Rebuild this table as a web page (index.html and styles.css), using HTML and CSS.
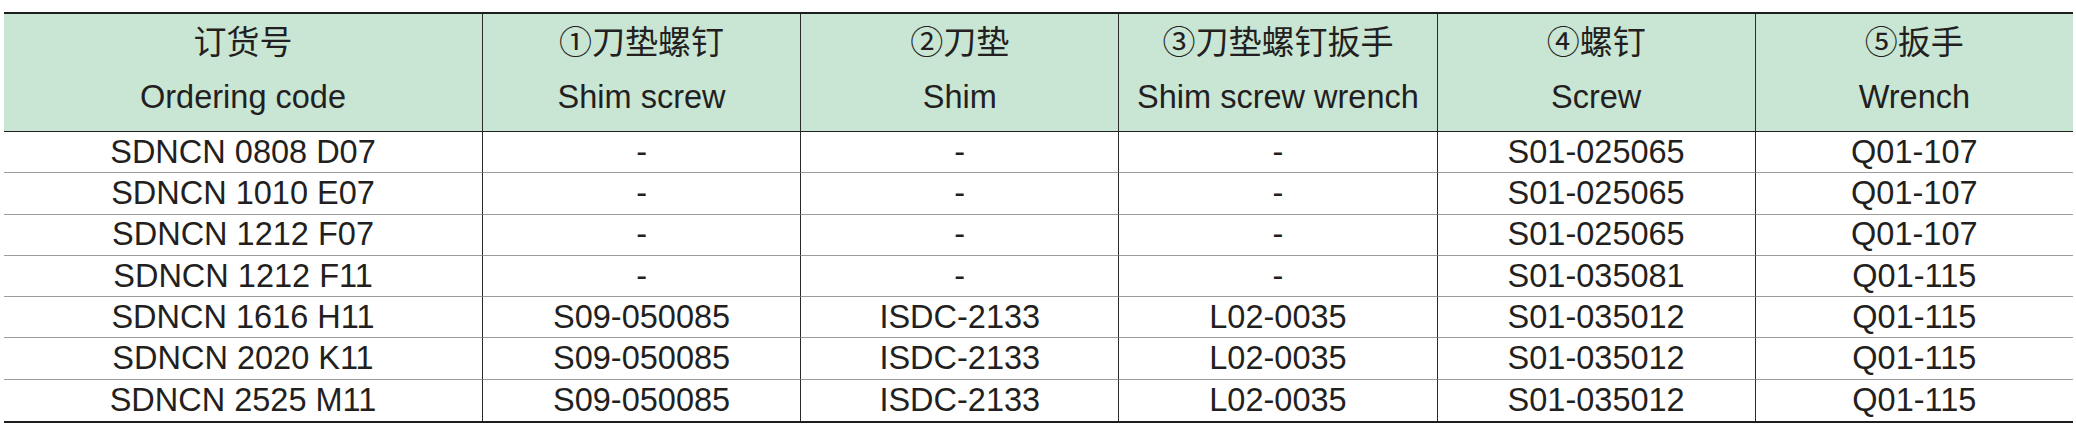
FILE: index.html
```html
<!DOCTYPE html>
<html lang="zh-CN">
<head>
<meta charset="utf-8">
<title>SDNCN 配件表</title>
<link rel="stylesheet" href="styles.css">
</head>
<body>
<div class="spec-table">
  <div class="cell head"><span class="zh">订货号</span><span class="en">Ordering code</span></div>
  <div class="cell head div"><span class="zh">①刀垫螺钉</span><span class="en">Shim screw</span></div>
  <div class="cell head div"><span class="zh">②刀垫</span><span class="en">Shim</span></div>
  <div class="cell head div"><span class="zh">③刀垫螺钉扳手</span><span class="en">Shim screw wrench</span></div>
  <div class="cell head div"><span class="zh">④螺钉</span><span class="en">Screw</span></div>
  <div class="cell head div"><span class="zh">⑤扳手</span><span class="en">Wrench</span></div>

  <div class="cell">SDNCN 0808 D07</div>
  <div class="cell div">-</div>
  <div class="cell div">-</div>
  <div class="cell div">-</div>
  <div class="cell div">S01-025065</div>
  <div class="cell div">Q01-107</div>

  <div class="cell">SDNCN 1010 E07</div>
  <div class="cell div">-</div>
  <div class="cell div">-</div>
  <div class="cell div">-</div>
  <div class="cell div">S01-025065</div>
  <div class="cell div">Q01-107</div>

  <div class="cell">SDNCN 1212 F07</div>
  <div class="cell div">-</div>
  <div class="cell div">-</div>
  <div class="cell div">-</div>
  <div class="cell div">S01-025065</div>
  <div class="cell div">Q01-107</div>

  <div class="cell">SDNCN 1212 F11</div>
  <div class="cell div">-</div>
  <div class="cell div">-</div>
  <div class="cell div">-</div>
  <div class="cell div">S01-035081</div>
  <div class="cell div">Q01-115</div>

  <div class="cell">SDNCN 1616 H11</div>
  <div class="cell div">S09-050085</div>
  <div class="cell div">ISDC-2133</div>
  <div class="cell div">L02-0035</div>
  <div class="cell div">S01-035012</div>
  <div class="cell div">Q01-115</div>

  <div class="cell">SDNCN 2020 K11</div>
  <div class="cell div">S09-050085</div>
  <div class="cell div">ISDC-2133</div>
  <div class="cell div">L02-0035</div>
  <div class="cell div">S01-035012</div>
  <div class="cell div">Q01-115</div>

  <div class="cell last">SDNCN 2525 M11</div>
  <div class="cell div last">S09-050085</div>
  <div class="cell div last">ISDC-2133</div>
  <div class="cell div last">L02-0035</div>
  <div class="cell div last">S01-035012</div>
  <div class="cell div last">Q01-115</div>
</div>
</body>
</html>
```

FILE: styles.css
```css
html, body {
  margin: 0;
  padding: 0;
  background: #ffffff;
}

body {
  font-family: "Liberation Sans", Arial, "Noto Sans CJK SC", sans-serif;
  color: #231f20;
}

.spec-table {
  display: grid;
  grid-template-columns: 478px repeat(5, 318.2px);
  grid-template-rows: 118px repeat(7, 41.3px);
  margin: 12px 0 0 4px;
  width: 2069px;
  border-top: 2px solid #1e1e1e;
  border-bottom: 2px solid #1e1e1e;
}

.cell {
  box-sizing: border-box;
  display: flex;
  align-items: center;
  justify-content: center;
  font-size: 32.5px;
  line-height: 1;
  white-space: nowrap;
  border-bottom: 1px solid #9c9c9c;
}

.cell.last {
  border-bottom: none;
}

.cell.div {
  border-left: 1px solid #2a2a2a;
}

.head {
  flex-direction: column;
  justify-content: flex-start;
  padding-top: 2px;
  background: #c9e5d4;
  border-bottom: 1px solid #1e1e1e;
}

.head .zh,
.head .en {
  display: block;
  height: 54px;
  line-height: 54px;
}

.head .zh {
  font-family: "Liberation Sans", "Noto Sans CJK SC", sans-serif;
  font-size: 33px;
}
```
